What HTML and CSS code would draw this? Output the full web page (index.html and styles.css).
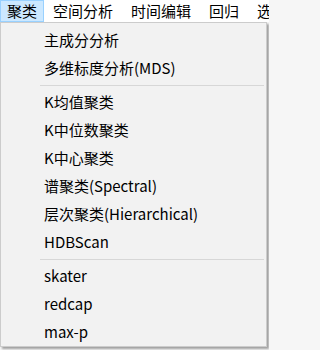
FILE: index.html
```html
<!DOCTYPE html>
<html lang="zh-CN">
<head>
<meta charset="utf-8">
<link rel="stylesheet" href="styles.css">
</head>
<body>
<div class="menubar">
  <div class="top-item active">聚类</div>
  <div class="top-item">空间分析</div>
  <div class="top-item">时间编辑</div>
  <div class="top-item">回归</div>
  <div class="top-item">选择</div>
</div>
<div class="dropdown">
  <div class="item">主成分分析</div>
  <div class="item">多维标度分析(MDS)</div>
  <div class="sep"></div>
  <div class="item">K均值聚类</div>
  <div class="item">K中位数聚类</div>
  <div class="item">K中心聚类</div>
  <div class="item">谱聚类(Spectral)</div>
  <div class="item">层次聚类(Hierarchical)</div>
  <div class="item">HDBScan</div>
  <div class="sep"></div>
  <div class="item">skater</div>
  <div class="item">redcap</div>
  <div class="item">max-p</div>
</div>
</body>
</html>
```
FILE: styles.css
```css
html, body {
  margin: 0;
  padding: 0;
}
body {
  width: 269px;
  height: 350px;
  overflow: hidden;
  background: #f6f6f6;
  font-family: "Noto Sans CJK SC", "Noto Sans", sans-serif;
  font-size: 15px;
  color: #000;
}
.menubar {
  display: flex;
  height: 22px;
  background: #fff;
  white-space: nowrap;
  overflow: hidden;
}
.top-item {
  flex: none;
  box-sizing: border-box;
  height: 22px;
  line-height: 20px;
  padding: 0 8px;
  border: 1px solid transparent;
}
.top-item.active {
  padding: 0 6px;
  background: #cce8ff;
  border-color: #99d1ff;
}
.dropdown {
  box-sizing: border-box;
  width: 267px;
  border: 1px solid #cccccc;
  background: #f2f2f2;
  padding-top: 3px;
  box-shadow: 2px 2px 2px rgba(0, 0, 0, 0.35);
}
.item {
  height: 28px;
  line-height: 28px;
  padding-left: 43px;
  white-space: nowrap;
}
.sep {
  height: 6px;
  display: flex;
  align-items: center;
  padding-left: 39px;
  padding-right: 2px;
}
.sep::before {
  content: "";
  flex: 1;
  height: 1px;
  background: #d7d7d7;
}
```
